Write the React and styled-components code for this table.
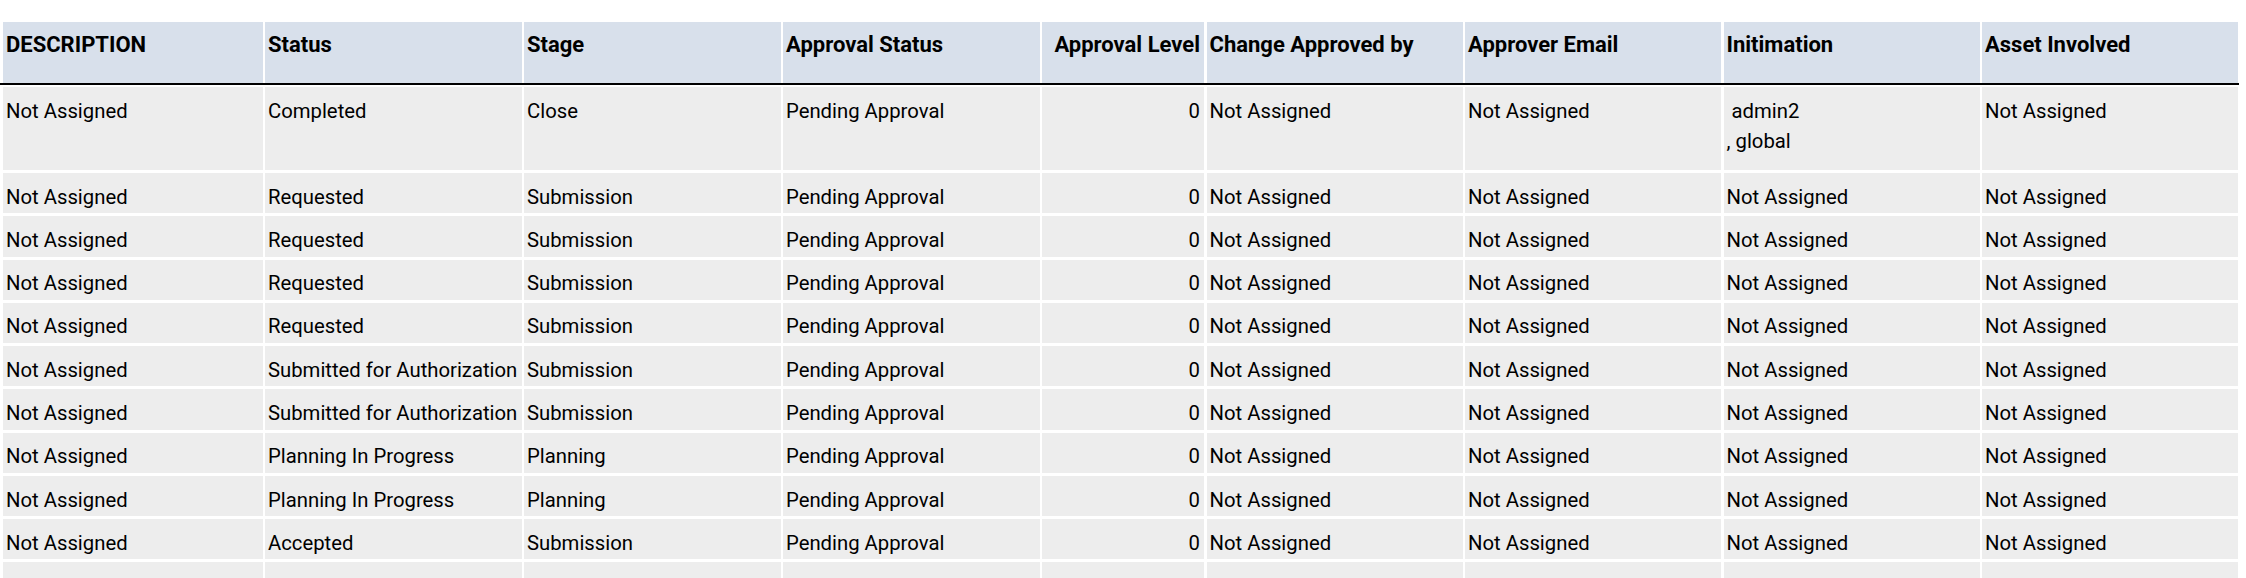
import React from 'react';
import styled, {createGlobalStyle} from 'styled-components';

const COLS = '259.5px repeat(3, 256.5px) 162px repeat(4, 256px)';

const headers = [
    {label: 'DESCRIPTION'},
    {label: 'Status'},
    {label: 'Stage'},
    {label: 'Approval Status'},
    {label: 'Approval Level', right: true},
    {label: 'Change Approved by'},
    {label: 'Approver Email'},
    {label: 'Initimation'},
    {label: 'Asset Involved'},
];

const NA = 'Not Assigned';

const rows = [
    ['Completed', 'Close', 'multi'],
    ['Requested', 'Submission'],
    ['Requested', 'Submission'],
    ['Requested', 'Submission'],
    ['Requested', 'Submission'],
    ['Submitted for Authorization', 'Submission'],
    ['Submitted for Authorization', 'Submission'],
    ['Planning In Progress', 'Planning'],
    ['Planning In Progress', 'Planning'],
    ['Accepted', 'Submission'],
    ['Requested', 'Submission'],
];

const App = () => {
    return (
        <>
            <GlobalStyle />
            <Page>
                <Table>
                    <HeaderRow>
                        {headers.map(h => (
                            <HeadCell key={h.label} $right={h.right}>{h.label}</HeadCell>
                        ))}
                    </HeaderRow>
                    <Divider />
                    <Body>
                        {rows.map(([status, stage, init], i) => (
                            <Row key={i}>
                                <Cell>{NA}</Cell>
                                <Cell>{status}</Cell>
                                <Cell>{stage}</Cell>
                                <Cell>Pending Approval</Cell>
                                <Cell $right>0</Cell>
                                <Cell>{NA}</Cell>
                                <Cell>{NA}</Cell>
                                <Cell>
                                    {init === 'multi' ? (
                                        <Multi>
                                            <span>{'\u00a0admin2'}</span>
                                            <span>, global</span>
                                        </Multi>
                                    ) : NA}
                                </Cell>
                                <Cell>{NA}</Cell>
                            </Row>
                        ))}
                    </Body>
                </Table>
            </Page>
        </>
    )
}

export default App

const GlobalStyle = createGlobalStyle`
body{
    margin:0;
    background:#fff;
    font-family: Roboto, "Noto Sans", sans-serif;
    color:#000;
    overflow:hidden;
}
`
const Page = styled.div`
padding-top:22px;
padding-left:3px;
height:578px;
box-sizing:border-box;
overflow:hidden;
`
const Table = styled.div`
display:flex;
flex-direction:column;
width:max-content;
`
const HeaderRow = styled.div`
display:grid;
grid-template-columns:${COLS};
column-gap:2.5px;
height:60.7px;
`
const HeadCell = styled.div`
background:#d8e0eb;
font-weight:700;
font-size:22px;
line-height:30px;
padding:8.4px 4px 0 3px;
text-align:${p => p.$right ? 'right' : 'left'};
white-space:nowrap;
`
const Divider = styled.div`
height:2px;
background:#000;
margin:0 0 2.6px -3px;
width:calc(100% + 4px);
`
const Body = styled.div`
display:flex;
flex-direction:column;
gap:3px;
`
const Row = styled.div`
display:grid;
grid-template-columns:${COLS};
column-gap:2.5px;
`
const Cell = styled.div`
background:#ededed;
font-size:20.3px;
line-height:30px;
padding:8.6px 4px 1.7px 3px;
text-align:${p => p.$right ? 'right' : 'left'};
white-space:nowrap;
`
const Multi = styled.div`
display:flex;
flex-direction:column;
padding-bottom:12.4px;
`
